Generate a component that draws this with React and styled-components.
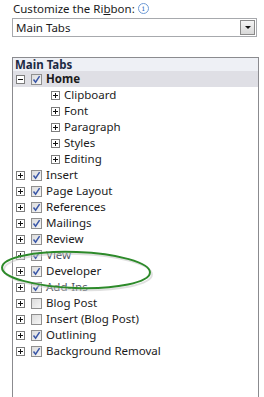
import React from 'react'
import styled, { createGlobalStyle } from 'styled-components'

const Global = createGlobalStyle`
  html, body { margin: 0; padding: 0; background: #fff; }
  body { font-family: "Noto Sans", "Open Sans", sans-serif; }
`

const Page = styled.div`
  position: relative;
  width: 264px;
  height: 397px;
  overflow: hidden;
  background: #fff;
  padding: 1px 0 0 12px;
  box-sizing: border-box;
  color: #1b1b1b;
  font-size: 11.5px;
`

const Title = styled.div`
  display: flex;
  align-items: center;
  gap: 3px;
  height: 15px;
  padding-left: 1px;
  u { text-decoration: underline; text-underline-offset: 1px; }
`

const Info = styled.span`
  display: inline-flex;
  align-items: center;
  justify-content: center;
  width: 9px;
  height: 9px;
  border: 1px solid #6f9bd6;
  border-radius: 50%;
  color: #3b74c8;
  font-size: 8px;
  font-family: "DejaVu Serif", serif;
  line-height: 1;
`

const Select = styled.div`
  margin-top: 2px;
  width: 245px;
  height: 19px;
  box-sizing: border-box;
  border: 1px solid #a7a9ad;
  display: flex;
  align-items: center;
  justify-content: space-between;
  padding-left: 3px;
`

const SelectButton = styled.div`
  width: 15px;
  height: 15px;
  margin-right: 1px;
  box-sizing: border-box;
  border: 1px solid #8a8a8a;
  background: linear-gradient(#f4f4f4, #d8d8d8);
  display: flex;
  align-items: center;
  justify-content: center;
  &::after {
    content: '';
    border-left: 3px solid transparent;
    border-right: 3px solid transparent;
    border-top: 3px solid #111;
  }
`

const List = styled.div`
  margin-top: 20px;
  width: 247px;
  height: 360px;
  box-sizing: border-box;
  border: 1px solid #8b8b8f;
  border-bottom: none;
`

const Header = styled.div`
  height: 13px;
  line-height: 13px;
  padding-left: 2px;
  background: #eef0f5;
  font-weight: 700;
  color: #1c2a44;
`

const Row = styled.div`
  display: flex;
  align-items: center;
  height: 16px;
  padding-left: ${p => (p.$child ? 38 : 3)}px;
  background: ${p => (p.$selected ? '#dfdfe5' : 'transparent')};
  font-weight: ${p => (p.$selected ? 700 : 400)};
  color: ${p => (p.$faded ? '#4a4f5c' : '#1b1b1b')};
`

const Expander = styled.span`
  position: relative;
  width: 9px;
  height: 9px;
  box-sizing: border-box;
  border: 1px solid #7d7d7d;
  background: #fff;
  margin-right: ${p => (p.$child ? 4 : 6)}px;
  flex: none;
  &::before {
    content: '';
    position: absolute;
    left: 1px;
    top: 3px;
    width: 5px;
    height: 1px;
    background: #111;
  }
  &::after {
    content: '';
    display: ${p => (p.$open ? 'none' : 'block')};
    position: absolute;
    left: 3px;
    top: 1px;
    width: 1px;
    height: 5px;
    background: #111;
  }
`

const Check = styled.span`
  width: 11px;
  height: 11px;
  box-sizing: border-box;
  border: 1px solid #8f8f8f;
  background: linear-gradient(135deg, #dcdcdc, #f6f6f6);
  margin-right: 4px;
  flex: none;
  display: flex;
  align-items: center;
  justify-content: center;
`

const Label = styled.span`
  white-space: nowrap;
  line-height: 16px;
`

const Ring = styled.svg`
  position: absolute;
  left: 0;
  top: 247px;
  pointer-events: none;
`

const Tick = () => (
  <svg width="9" height="9" viewBox="0 0 9 9">
    <path d="M1.5 4.5 L3.6 7.2 L7.6 1.2" fill="none" stroke="#3a57a8" strokeWidth="1.5" />
  </svg>
)

const tabs = [
  { name: 'Insert', on: true },
  { name: 'Page Layout', on: true },
  { name: 'References', on: true },
  { name: 'Mailings', on: true },
  { name: 'Review', on: true },
  { name: 'View', on: true, faded: true },
  { name: 'Developer', on: true },
  { name: 'Add-Ins', on: true, faded: true },
  { name: 'Blog Post', on: false },
  { name: 'Insert (Blog Post)', on: false },
  { name: 'Outlining', on: true },
  { name: 'Background Removal', on: true },
]

const groups = ['Clipboard', 'Font', 'Paragraph', 'Styles', 'Editing']

export default function App() {
  return (
    <Page>
      <Global />
      <Title>
        <span>Customize the Ri<u>b</u>bon:</span>
        <Info>i</Info>
      </Title>
      <Select>
        <span>Main Tabs</span>
        <SelectButton />
      </Select>
      <List>
        <Header>Main Tabs</Header>
        <Row $selected>
          <Expander $open />
          <Check><Tick /></Check>
          <Label>Home</Label>
        </Row>
        {groups.map(g => (
          <Row $child key={g}>
            <Expander $child />
            <Label>{g}</Label>
          </Row>
        ))}
        {tabs.map(t => (
          <Row key={t.name} $faded={t.faded}>
            <Expander />
            <Check>{t.on && <Tick />}</Check>
            <Label>{t.name}</Label>
          </Row>
        ))}
      </List>
      <Ring width="160" height="48" viewBox="0 0 160 48">
        <ellipse cx="77" cy="24" rx="74" ry="18" fill="none" stroke="#ffffff" strokeOpacity="0.45" strokeWidth="5" transform="rotate(2 77 24)" />
        <ellipse cx="78" cy="25" rx="74" ry="18" fill="none" stroke="#000" strokeOpacity="0.12" strokeWidth="2" transform="rotate(2 78 25)" />
        <ellipse cx="76" cy="23" rx="74" ry="18" fill="none" stroke="#2d8a2a" strokeWidth="2" transform="rotate(2 76 23)" />
      </Ring>
    </Page>
  )
}
